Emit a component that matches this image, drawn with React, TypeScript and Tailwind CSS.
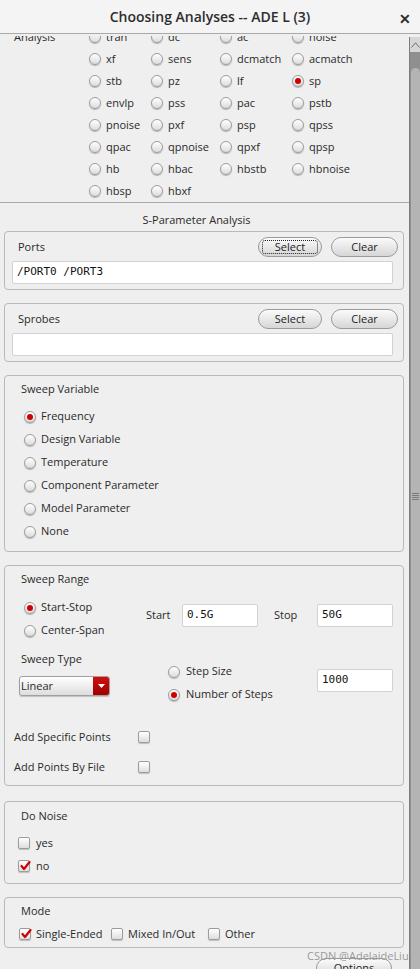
import React from "react";

const analyses = [
  ["tran", "dc", "ac", "noise"],
  ["xf", "sens", "dcmatch", "acmatch"],
  ["stb", "pz", "lf", "sp"],
  ["envlp", "pss", "pac", "pstb"],
  ["pnoise", "pxf", "psp", "qpss"],
  ["qpac", "qpnoise", "qpxf", "qpsp"],
  ["hb", "hbac", "hbstb", "hbnoise"],
  ["hbsp", "hbxf", "", ""],
];

function Radio({ checked = false }: { checked?: boolean }) {
  return (
    <span className="relative inline-flex h-[12px] w-[12px] shrink-0 items-center justify-center rounded-full border border-[#9c9c9c] bg-gradient-to-b from-[#ffffff] to-[#dcdcdc] shadow-[0_1px_1px_rgba(0,0,0,0.25)]">
      {checked && <span className="h-[6px] w-[6px] rounded-full bg-[#d00000]" />}
    </span>
  );
}

function Check({ checked = false }: { checked?: boolean }) {
  return (
    <span className="relative inline-flex h-[12px] w-[12px] shrink-0 items-center justify-center rounded-[2px] border border-[#9c9c9c] bg-gradient-to-b from-[#ffffff] to-[#dedede] shadow-[0_1px_1px_rgba(0,0,0,0.2)]">
      {checked && (
        <svg width="11" height="10" viewBox="0 0 11 10" className="absolute left-[1px] top-[0px]">
          <path d="M1.5 5 L4 8 L9.5 1" fill="none" stroke="#d00000" strokeWidth="2.2" strokeLinecap="round" strokeLinejoin="round" />
        </svg>
      )}
    </span>
  );
}

function Pill({ label, focused = false, w }: { label: string; focused?: boolean; w: string }) {
  return (
    <div className={`${w} relative flex h-[20px] items-center justify-center rounded-full border border-[#9a9a9a] bg-gradient-to-b from-[#fbfbfb] to-[#d6d6d6] text-[#222]`}>
      {focused && <span className="absolute inset-x-[3px] inset-y-[2px] rounded-[3px] border border-dotted border-[#222]" />}
      {label}
    </div>
  );
}

function Field({ value = "", w }: { value?: string; w: string }) {
  return (
    <div className={`${w} flex h-[23px] items-center rounded-[2px] border border-[#d2d2d2] bg-white pl-[4px] font-['DejaVu_Sans_Mono',monospace] text-[11px] text-[#111]`}>
      {value}
    </div>
  );
}

function Box({ h, mt, children }: { h: string; mt: string; children: React.ReactNode }) {
  return (
    <div className={`${h} ${mt} mx-[4px] w-[400px] rounded-[4px] border border-[#b9b9b9]`}>{children}</div>
  );
}

export default function App() {
  return (
    <div className="relative h-[969px] w-[420px] overflow-hidden bg-[#efefef] font-['Open_Sans',sans-serif] text-[11px] text-[#2a2a2a]">
      <div className="relative flex h-[34px] items-center justify-center border-b border-[#a9a9a9] bg-[#f4f4f4]">
        <span className="text-[14px] font-semibold text-[#2e2e2e]">Choosing Analyses -- ADE L (3)</span>
        <span className="absolute right-[9px] top-[8px] text-[14px] font-bold text-[#2e2e2e]">✕</span>
      </div>

      <div className="flex h-[935px]">
        <div className="mt-[2px] w-[409px] overflow-hidden">
          <div className="-mt-[10px]">
            <div className="flex border-b border-[#a8a8a8]">
              <div className="h-[22px] w-[89px] pl-[14px] leading-[22px]">Analysis</div>
              <div className="grid grid-cols-[62px_69px_72px_80px]">
                {analyses.flat().map((a, i) => (
                  <div key={i} className="flex h-[22px] items-center gap-[5px]">
                    {a && (
                      <>
                        <Radio checked={a === "sp"} />
                        <span>{a}</span>
                      </>
                    )}
                  </div>
                ))}
              </div>
            </div>

            <div className="flex h-[28px] items-center justify-center pr-[16px] pt-[6px]">S-Parameter Analysis</div>

            <Box h="h-[59px]" mt="mt-0">
              <div className="mt-[5px] flex items-center pl-[13px] pr-[5px]">
                <span className="flex-1">Ports</span>
                <Pill label="Select" focused w="w-[64px]" />
                <div className="w-[9px]" />
                <Pill label="Clear" w="w-[67px]" />
              </div>
              <div className="ml-[7px] mt-[4px]">
                <Field value="/PORT0 /PORT3" w="w-[381px]" />
              </div>
            </Box>

            <Box h="h-[59px]" mt="mt-[13px]">
              <div className="mt-[5px] flex items-center pl-[13px] pr-[5px]">
                <span className="flex-1">Sprobes</span>
                <Pill label="Select" w="w-[64px]" />
                <div className="w-[9px]" />
                <Pill label="Clear" w="w-[67px]" />
              </div>
              <div className="ml-[7px] mt-[4px]">
                <Field w="w-[381px]" />
              </div>
            </Box>

            <Box h="h-[177px]" mt="mt-[13px]">
              <div className="mt-[3px] h-[20px] pl-[16px] leading-[20px]">Sweep Variable</div>
              <div className="mt-[6px] pl-[19px]">
                {["Frequency", "Design Variable", "Temperature", "Component Parameter", "Model Parameter", "None"].map((s, i) => (
                  <div key={s} className="flex h-[23px] items-center gap-[5px]">
                    <Radio checked={i === 0} />
                    <span>{s}</span>
                  </div>
                ))}
              </div>
            </Box>

            <Box h="h-[221px]" mt="mt-[13px]">
              <div className="mt-[3px] h-[20px] pl-[16px] leading-[20px]">Sweep Range</div>
              <div className="mt-[7px] flex">
                <div className="w-[141px] pl-[19px]">
                  <div className="flex h-[23px] items-center gap-[5px]">
                    <Radio checked />
                    <span>Start-Stop</span>
                  </div>
                  <div className="flex h-[23px] items-center gap-[5px]">
                    <Radio />
                    <span>Center-Span</span>
                  </div>
                </div>
                <div className="mt-[8px] flex h-[23px] items-center">
                  <span className="w-[36px]">Start</span>
                  <Field value="0.5G" w="w-[76px]" />
                  <span className="ml-[16px] w-[43px]">Stop</span>
                  <Field value="50G" w="w-[76px]" />
                </div>
              </div>

              <div className="flex">
                <div className="w-[163px] pl-[14px]">
                  <div className="mt-[7px] h-[20px] pl-[2px] leading-[20px]">Sweep Type</div>
                  <div className="mt-[7px] flex h-[20px] w-[91px] overflow-hidden rounded-[3px] border border-[#a0a0a0] bg-gradient-to-b from-[#ffffff] to-[#dddddd] shadow-[0_1px_1px_rgba(0,0,0,0.2)]">
                    <span className="flex-1 pl-[1px] leading-[18px]">Linear</span>
                    <span className="flex w-[16px] items-center justify-center bg-gradient-to-b from-[#d01010] to-[#a00000]">
                      <svg width="7" height="4" viewBox="0 0 7 4">
                        <path d="M0 0 L7 0 L3.5 4 Z" fill="#fff" />
                      </svg>
                    </span>
                  </div>
                </div>
                <div className="mt-[18px] w-[149px]">
                  <div className="flex h-[23px] items-center gap-[6px]">
                    <Radio />
                    <span>Step Size</span>
                  </div>
                  <div className="flex h-[23px] items-center gap-[6px]">
                    <Radio checked />
                    <span>Number of Steps</span>
                  </div>
                </div>
                <div className="mt-[27px]">
                  <Field value="1000" w="w-[76px]" />
                </div>
              </div>

              <div className="mt-[21px] pl-[9px]">
                <div className="flex h-[20px] items-center">
                  <span className="w-[124px]">Add Specific Points</span>
                  <Check />
                </div>
                <div className="mt-[10px] flex h-[20px] items-center">
                  <span className="w-[124px]">Add Points By File</span>
                  <Check />
                </div>
              </div>
            </Box>

            <Box h="h-[83px]" mt="mt-[15px]">
              <div className="mt-[4px] h-[20px] pl-[16px] leading-[20px]">Do Noise</div>
              <div className="mt-[7px] flex h-[20px] items-center gap-[6px] pl-[13px]">
                <Check />
                <span>yes</span>
              </div>
              <div className="mt-[3px] flex h-[20px] items-center gap-[6px] pl-[13px]">
                <Check checked />
                <span>no</span>
              </div>
            </Box>

            <Box h="h-[51px]" mt="mt-[13px]">
              <div className="mt-[3px] h-[20px] pl-[16px] leading-[20px]">Mode</div>
              <div className="mt-[3px] flex h-[20px] items-center pl-[14px]">
                <Check checked />
                <span className="ml-[5px] w-[75px]">Single-Ended</span>
                <Check />
                <span className="ml-[5px] w-[80px]">Mixed In/Out</span>
                <Check />
                <span className="ml-[5px]">Other</span>
              </div>
            </Box>

            <div className="mt-[10px] flex items-start pl-[14px]">
              <span className="mt-[13px] w-[55px]">Enabled</span>
              <span className="mt-[15px]">
                <Check checked />
              </span>
              <div className="ml-[235px]">
                <Pill label="Options" w="w-[76px]" />
              </div>
            </div>
          </div>
        </div>

        <div className="mt-[3px] flex w-[11px] flex-col border-l border-[#7d7d7d] bg-[#8f8f8f]">
          <div className="flex h-[15px] items-center justify-center bg-[#d6d6d6]">
            <svg width="9" height="6" viewBox="0 0 9 6">
              <path d="M0.5 5.5 L4.5 0.8 L8.5 5.5" fill="none" stroke="#6b6b6b" strokeWidth="1" />
            </svg>
          </div>
          <div className="mt-[16px] ml-[1px] flex flex-1 items-center justify-center rounded-t-[6px] bg-[#b4b4b4] pb-[44px]">
            <div className="flex flex-col gap-[1px]">
              <span className="h-px w-[7px] bg-[#7a7a7a]" />
              <span className="h-px w-[7px] bg-[#7a7a7a]" />
              <span className="h-px w-[7px] bg-[#7a7a7a]" />
              <span className="h-px w-[7px] bg-[#7a7a7a]" />
            </div>
          </div>
        </div>
      </div>

      <span className="absolute left-[307px] top-[948px] text-[11px] text-[#9a9a9a]">CSDN @AdelaideLiu</span>
    </div>
  );
}
